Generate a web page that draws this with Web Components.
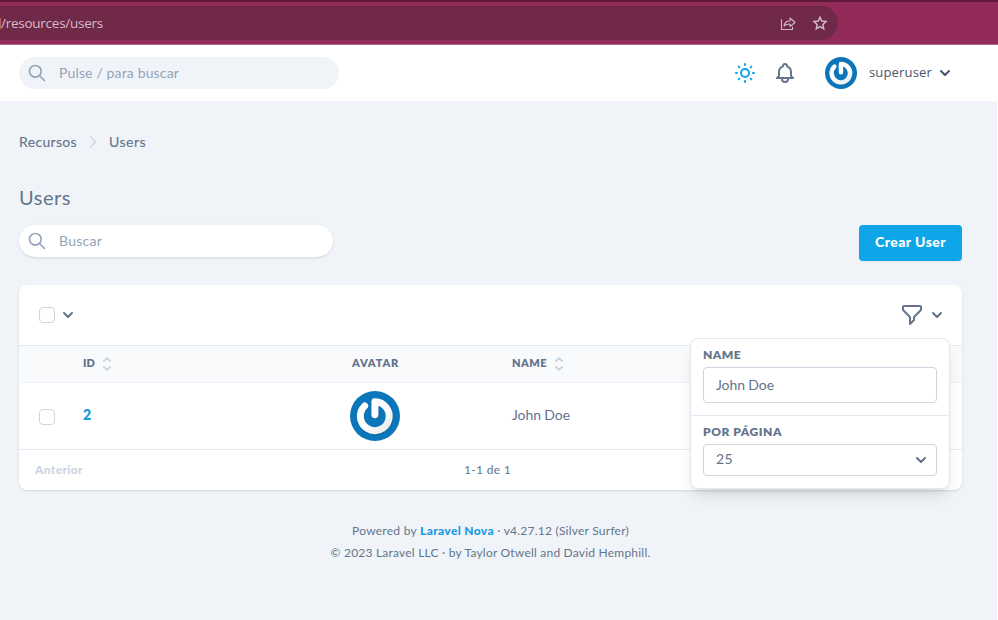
<!DOCTYPE html>
<html lang="es">
<head>
<meta charset="utf-8">
<title>Users</title>
<style>
html,body{margin:0;height:100%;overflow:hidden;background:#fff}
body{font-family:Lato,"Open Sans",sans-serif;font-size:14px;color:#64748b}
</style>
</head>
<body>
<nova-app></nova-app>
<script>
const define = (name, html, ready) => customElements.define(name, class extends HTMLElement {
  connectedCallback() {
    if (this.shadowRoot) return;
    const t = document.createElement('template');
    t.innerHTML = html;
    this.attachShadow({mode:'open'}).append(t.content.cloneNode(true));
    if (ready) ready(this);
  }
});

/* One line of text tracked so that it fills the width in "w". */
define('fit-text', `<style>:host{display:inline-block;white-space:pre}span{display:inline-block}</style><span><slot></slot></span>`, el => {
  const s = el.shadowRoot.querySelector('span');
  const w = parseFloat(el.getAttribute('w')), n = el.textContent.length;
  s.style.letterSpacing = '0px';
  const d = (w - s.getBoundingClientRect().width) / Math.max(1, n);
  s.style.letterSpacing = d.toFixed(3) + 'px';
  el.style.width = w + 'px';
});

const icons = {
  search: ['24','<path d="M21 21l-6-6m2-5a7 7 0 11-14 0 7 7 0 0114 0z"/>',2],
  sun: ['24','<path d="M12 3v1m0 16v1m9-9h-1M4 12H3m15.364 6.364l-.707-.707M6.343 6.343l-.707-.707m12.728 0l-.707.707M6.343 17.657l-.707.707M16 12a4 4 0 11-8 0 4 4 0 018 0z"/>',2],
  bell: ['24','<path d="M15 17h5l-1.405-1.405A2.032 2.032 0 0118 14.158V11a6.002 6.002 0 00-4-5.659V5a2 2 0 10-4 0v.341C7.67 6.165 6 8.388 6 11v3.159c0 .538-.214 1.055-.595 1.436L4 17h5m6 0v1a3 3 0 11-6 0v-1m6 0H9"/>',2],
  filter: ['24','<path d="M3 4a1 1 0 011-1h16a1 1 0 011 1v2.586a1 1 0 01-.293.707l-6.414 6.414a1 1 0 00-.293.707V17l-4 4v-6.586a1 1 0 00-.293-.707L3.293 7.293A1 1 0 013 6.586V4z"/>',2],
  down: ['12','<path d="M2 4l4 4 4-4"/>',2],
  right: ['12','<path d="M3.500 1l5 5-5 5"/>',1.2],
  sort: ['16','<path d="M4.900 4.900L8 2.200l3.100 2.700M4.900 11.100L8 13.800l3.100-2.700"/>',2],
  share: ['16','<path d="M1.500 4.500v10h11v-2.500M4 11c.500-3.500 2.500-5 6-5V3l5 4.500-5 4V9C7.500 9 5.500 9.400 4 11z"/>',1.1],
  star: ['16','<path stroke-linejoin="miter" d="M8 2.200l1.800 3.900 4.200.5-3.100 2.900.8 4.200L8 11.600l-3.700 2.100.8-4.200L2 6.600l4.200-.5z"/>',1.5]
};
define('nova-icon', `<style>:host{display:block;flex:none}svg{display:block;width:100%;height:100%;fill:none;stroke:currentColor;stroke-linecap:round;stroke-linejoin:round}</style>`, el => {
  const [box, d, w] = icons[el.getAttribute('name')];
  el.style.width = el.style.height = el.getAttribute('size') + 'px';
  el.shadowRoot.innerHTML += `<svg viewBox="0 0 ${box} ${box}" stroke-width="${w}">${d}</svg>`;
});

define('user-avatar', `<style>:host{display:block;flex:none}svg{display:block;width:100%;height:100%}</style>
<svg viewBox="0 0 50 50"><defs><linearGradient id="g" gradientUnits="userSpaceOnUse" x1="12" y1="10" x2="38" y2="42"><stop offset=".5" stop-color="#fff"/><stop offset="1" stop-color="#e8e8e8"/></linearGradient><filter id="s" x="-20%" y="-20%" width="150%" height="150%"><feDropShadow dx=".4" dy=".5" stdDeviation=".6" flood-color="#023761" flood-opacity=".45"/></filter></defs>
<circle cx="25" cy="25" r="25" fill="#0b76ba"/><g fill="none" stroke="url(#g)" stroke-width="6.900" stroke-linecap="round" filter="url(#s)"><path d="M24.900 23.800V10.800A14.400 14.400 0 1 1 14.700 14.900" stroke-linejoin="round"/></g></svg>`, el => {
  el.style.width = el.style.height = el.getAttribute('size') + 'px';
});

define('check-box', `<style>:host{display:block;box-sizing:border-box;width:16px;height:16px;border:1px solid #cbd5e1;border-radius:4px;background:#fff;flex:none}</style>`);

define('browser-bar', `<style>
:host{display:block;box-sizing:border-box;height:45px;background:#922b5a;border-top:2px solid #5d1a39;border-bottom:1px solid #b0688a;padding-top:4px}
.pill{display:flex;align-items:center;box-sizing:border-box;width:838px;height:34px;border-radius:0 17px 17px 0;background:#702948;color:#d3b9c5;padding-right:10px}
.pill::before{content:"";width:1px;height:11px;background:#b5625f}
.url{font:13.500px/34px "Open Sans",sans-serif;flex:1;color:#d6bcc8}
nova-icon+nova-icon{margin-left:16px}
</style><div class="pill"><div class="url"><fit-text w="102">/resources/users</fit-text></div><nova-icon name="share" size="16"></nova-icon><nova-icon name="star" size="16"></nova-icon></div>`);

define('search-field', `<style>
:host{display:flex;align-items:center;box-sizing:border-box;height:32px;border-radius:16px;padding-left:8px;color:#94a3b8;background:var(--field,#f0f4f9)}
nova-icon{margin-right:12px}
::slotted(fit-text){margin-top:-2px}
</style><nova-icon name="search" size="20"></nova-icon><slot></slot>`);

define('top-nav', `<style>
:host{display:flex;align-items:center;height:56px;background:#fff;padding:0 47px 0 19px}
search-field{width:320px;margin-right:auto}
.sun{color:#0ea5e9;margin-right:16px}
.bell{margin-right:28px}
user-avatar{margin-right:12px}
.name{font:500 13px/20px "Open Sans",sans-serif;color:#475569;margin:-2px 7px 0 0}
.chev{color:#475569}
</style>
<search-field><fit-text w="120">Pulse / para buscar</fit-text></search-field>
<nova-icon class="sun" name="sun" size="24"></nova-icon>
<nova-icon class="bell" name="bell" size="24"></nova-icon>
<user-avatar size="32"></user-avatar>
<fit-text class="name" w="63">superuser</fit-text>
<nova-icon class="chev" name="down" size="12"></nova-icon>`);

define('bread-crumbs', `<style>:host{display:flex;align-items:center;height:20px;line-height:20px;-webkit-text-stroke:.15px #64748b}nova-icon{margin:0 10px;color:#cbd5e1}</style>
<fit-text w="58">Recursos</fit-text><nova-icon name="right" size="12"></nova-icon><fit-text w="37">Users</fit-text>`);

define('nova-button', `<style>:host{display:flex;align-items:center;justify-content:center;box-sizing:border-box;width:103px;height:36px;padding-bottom:3px;border-radius:4px;background:#0ea5e9;color:#fff;font-weight:900;box-shadow:0 1px 2px #0000000d}</style><slot></slot>`);

define('filter-menu', `<style>
:host{display:block;box-sizing:border-box;width:260px;height:151px;background:#fff;border:1px solid #e2e8f0;border-radius:8px;box-shadow:0 10px 15px -3px #0000001a,0 4px 6px -4px #0000001a}
section{padding:8px 12px 12px}
section+section{border-top:1px solid #e2e8f0}
h3{margin:0 0 4px;font:800 12px/16px Lato,sans-serif}
.box{display:flex;align-items:center;justify-content:space-between;box-sizing:border-box;height:36px;border:1px solid #cbd5e1;border-radius:4px;padding:0 9px 0 12px;color:#64748b}
.box fit-text{margin-top:-2px}
.box.select{height:32px}
.box.select fit-text{margin-top:-3px}
</style>
<section><h3><fit-text w="38">NAME</fit-text></h3><div class="box"><fit-text w="58">John Doe</fit-text></div></section>
<section><h3><fit-text w="79">POR PÁGINA</fit-text></h3><div class="box select"><fit-text w="17">25</fit-text><nova-icon name="down" size="12"></nova-icon></div></section>`);

define('resource-table', `<style>
:host{display:block;position:relative;height:205px;background:#fff;border-radius:8px;box-shadow:0 1px 3px #0000001a,0 1px 2px -1px #0000001a}
.bar{display:flex;align-items:center;height:60px;padding:0 19px 0 20px;border-bottom:1px solid #e2e8f0}
.bar .c{margin-left:7px}
.bar .f{margin-left:auto}
.row{display:grid;grid-template-columns:64px 219px 210px 1fr;align-items:center}
.head{height:36px;background:#f8fafc;border-bottom:1px solid #f1f5f9;font:800 11px/16px Lato,sans-serif}
.head .h{display:flex;align-items:center}
.head fit-text{margin-top:-2px}
.head nova-icon{margin-left:4px;color:#cbd5e1}
.body{height:66px;border-bottom:1px solid #e2e8f0}
.body check-box{margin:2px 0 0 20px}
.body fit-text{margin-top:-4px}
.id{color:#1a9be3;font-weight:800}
.foot{display:grid;grid-template-columns:1fr auto 1fr;height:40px;align-items:center;padding:0 16px;font-size:12px}
.foot fit-text{margin-top:-2px}
.prev{color:#cbd5e1;font-weight:900}
.count{margin-right:6px}
filter-menu{position:absolute;right:12px;top:53px}
</style>
<div class="bar"><check-box></check-box><nova-icon class="c" name="down" size="12"></nova-icon><nova-icon class="f" name="filter" size="24"></nova-icon><nova-icon name="down" size="12" style="margin-left:7px"></nova-icon></div>
<div class="row head"><span></span><span class="h"><fit-text w="12">ID</fit-text><nova-icon name="sort" size="16"></nova-icon></span><span class="h" style="padding-left:50px"><fit-text w="47">AVATAR</fit-text></span><span class="h"><fit-text w="35">NAME</fit-text><nova-icon name="sort" size="16"></nova-icon></span></div>
<div class="row body"><check-box></check-box><fit-text class="id" w="8">2</fit-text><span style="padding-left:48px"><user-avatar size="50"></user-avatar></span><fit-text w="58">John Doe</fit-text></div>
<div class="foot"><fit-text class="prev" w="48">Anterior</fit-text><fit-text class="count" w="47">1-1 de 1</fit-text><span></span></div>
<filter-menu></filter-menu>`);

define('page-footer', `<style>
:host{display:flex;flex-direction:column;align-items:center;font-size:12px;line-height:22px}
b{color:#1a9be3;font-weight:900}
div{white-space:pre}
</style><div><fit-text w="68">Powered by </fit-text><b><fit-text w="74">Laravel Nova</fit-text></b><fit-text w="135"> · v4.27.12 (Silver Surfer)</fit-text></div><div><fit-text w="320">© 2023 Laravel LLC · by Taylor Otwell and David Hemphill.</fit-text></div>`);

define('nova-app', `<style>
:host{display:block;height:620px}
main{box-sizing:border-box;width:997px;height:519px;background:#f0f4f9;padding:31px 35px 0 19px}
h1{font:400 20px/24px Lato,sans-serif;margin:33px 0 16px;height:24px}
.tools{display:flex;justify-content:space-between;align-items:flex-start;margin-bottom:24px}
.tools search-field{width:314px;--field:#fff;box-shadow:0 1px 3px #0000001a,0 1px 2px -1px #0000001a}
page-footer{margin-top:30px}
</style>
<browser-bar></browser-bar><top-nav></top-nav>
<main><bread-crumbs></bread-crumbs><h1><fit-text w="52">Users</fit-text></h1>
<div class="tools"><search-field><fit-text w="43">Buscar</fit-text></search-field><nova-button><fit-text w="71">Crear User</fit-text></nova-button></div>
<resource-table></resource-table><page-footer></page-footer></main>`);
</script>
</body>
</html>
